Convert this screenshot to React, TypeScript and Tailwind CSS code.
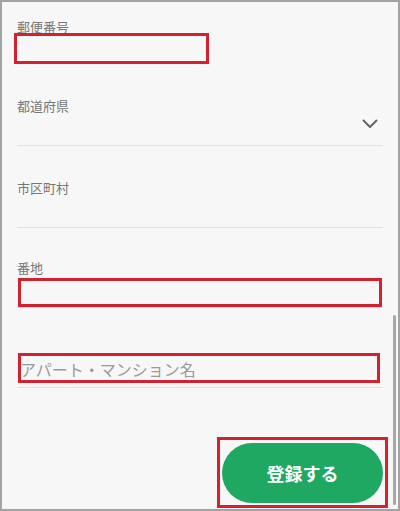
import React from "react";

const FONT = { fontFamily: '"Noto Sans CJK JP", "Noto Sans", sans-serif' };

function Field({
  label,
  children,
  className = "",
  line = true,
}: {
  label?: string;
  children?: React.ReactNode;
  className?: string;
  line?: boolean;
}) {
  return (
    <div className={className}>
      {label && (
        <div className="h-[18px] text-[13px] leading-[18px] text-[#777]">{label}</div>
      )}
      <div className={line ? "h-[31px] border-b border-[#e2e2e2]" : "h-[31px]"}>{children}</div>
    </div>
  );
}

// red annotation frames drawn over the screenshot
function Mark({ className }: { className: string }) {
  return <div className={`pointer-events-none absolute border-[3px] border-[#d2222f] ${className}`} />;
}

export default function App() {
  return (
    <div
      style={FONT}
      className="relative h-[511px] w-[400px] overflow-hidden border-2 border-[#a3a3a3] bg-[#f7f7f7]"
    >
      <div className="flex flex-col px-[15px] pt-[16px]">
        <Field label="郵便番号" line={false} />
        <Field label="都道府県" className="mt-[30px]">
          <div className="flex justify-end pr-[5px] pt-[4px]">
            <svg width="16" height="10" viewBox="0 0 16 10" fill="none">
              <polyline
                points="1.5,1.5 8,8 14.5,1.5"
                stroke="#666"
                strokeWidth="2"
                strokeLinecap="round"
                strokeLinejoin="round"
              />
            </svg>
          </div>
        </Field>
        <Field label="市区町村" className="mt-[33px]" />
        <Field label="番地" className="mt-[31px]" />
        <div className="mt-[48px] h-[32px] border-b border-[#e2e2e2] pl-[3px] pt-[1px] text-[16px] leading-[24px] text-[#9a9a9a]">
          アパート・マンション名
        </div>
        <div className="mt-[55px] flex justify-end">
          <button className="h-[60px] w-[161px] rounded-full bg-[#1ea862] text-[18px] font-bold text-white">
            登録する
          </button>
        </div>
      </div>

      <Mark className="left-[12px] top-[31px] h-[31px] w-[195px]" />
      <Mark className="left-[16px] top-[276px] h-[29px] w-[364px]" />
      <Mark className="left-[16px] top-[351px] h-[30px] w-[362px]" />
      <Mark className="left-[215px] top-[435px] h-[71px] w-[171px]" />

      <div className="absolute left-[391px] top-[313px] h-[190px] w-[3px] rounded-full bg-[#a8a8a8]" />
    </div>
  );
}
